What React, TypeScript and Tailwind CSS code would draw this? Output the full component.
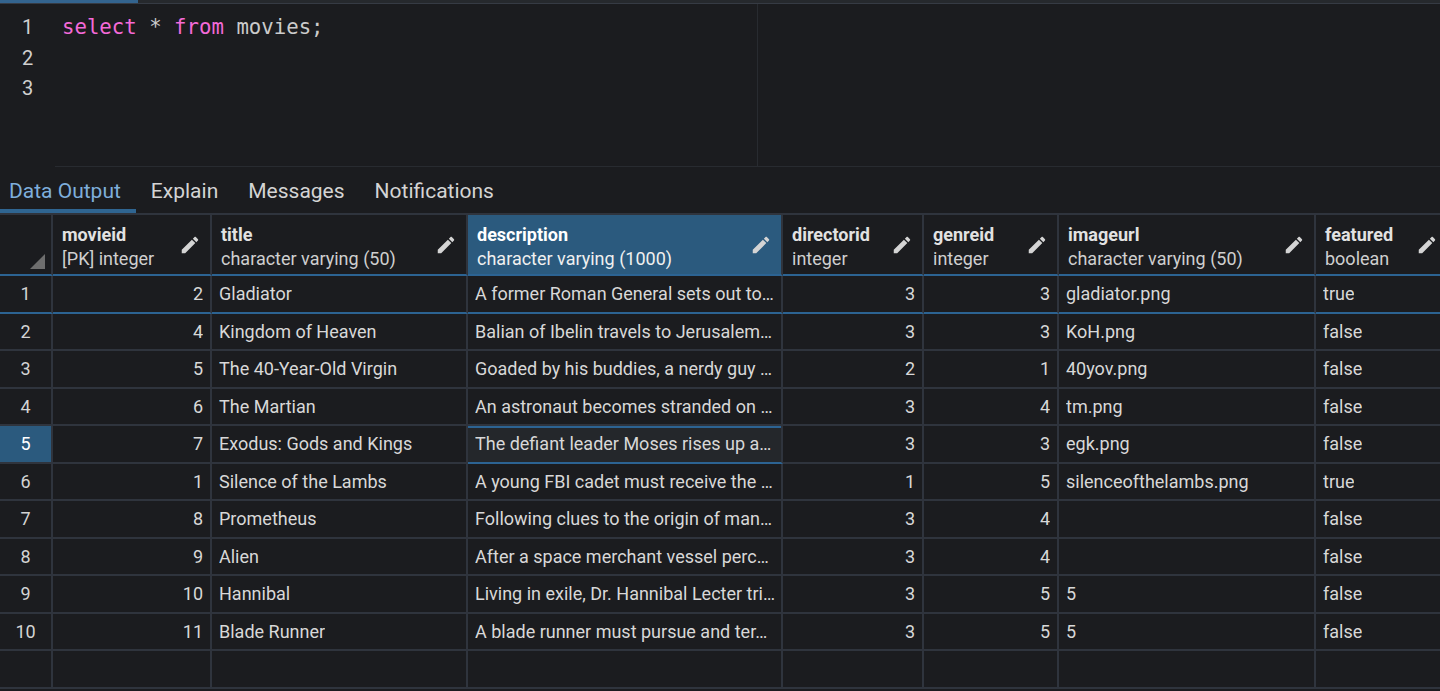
import React from "react";

type Col = { name: string; type: string; width: string; align: "left" | "right"; selected?: boolean };

const cols: Col[] = [
  { name: "movieid", type: "[PK] integer", width: "w-[159px]", align: "right" },
  { name: "title", type: "character varying (50)", width: "w-[256px]", align: "left" },
  { name: "description", type: "character varying (1000)", width: "w-[315px]", align: "left", selected: true },
  { name: "directorid", type: "integer", width: "w-[141px]", align: "right" },
  { name: "genreid", type: "integer", width: "w-[135px]", align: "right" },
  { name: "imageurl", type: "character varying (50)", width: "w-[257px]", align: "left" },
  { name: "featured", type: "boolean", width: "w-[133px]", align: "left" },
];

const rows: string[][] = [
  ["2", "Gladiator", "A former Roman General sets out to…", "3", "3", "gladiator.png", "true"],
  ["4", "Kingdom of Heaven", "Balian of Ibelin travels to Jerusalem…", "3", "3", "KoH.png", "false"],
  ["5", "The 40-Year-Old Virgin", "Goaded by his buddies, a nerdy guy …", "2", "1", "40yov.png", "false"],
  ["6", "The Martian", "An astronaut becomes stranded on …", "3", "4", "tm.png", "false"],
  ["7", "Exodus: Gods and Kings", "The defiant leader Moses rises up a…", "3", "3", "egk.png", "false"],
  ["1", "Silence of the Lambs", "A young FBI cadet must receive the …", "1", "5", "silenceofthelambs.png", "true"],
  ["8", "Prometheus", "Following clues to the origin of man…", "3", "4", "", "false"],
  ["9", "Alien", "After a space merchant vessel perc…", "3", "4", "", "false"],
  ["10", "Hannibal", "Living in exile, Dr. Hannibal Lecter tri…", "3", "5", "5", "false"],
  ["11", "Blade Runner", "A blade runner must pursue and ter…", "3", "5", "5", "false"],
];

function Pencil() {
  return (
    <svg width="22" height="22" viewBox="0 0 24 24" className="shrink-0 fill-[#d4d4d4]">
      <path d="M3 17.25V21h3.75L17.81 9.94l-3.75-3.75L3 17.25zM20.71 7.04c.39-.39.39-1.02 0-1.41l-2.34-2.34c-.39-.39-1.02-.39-1.41 0l-1.83 1.83 3.75 3.75 1.83-1.83z" />
    </svg>
  );
}

export default function App() {
  return (
    <div className="w-[1440px] h-[691px] overflow-hidden bg-[#1b1c1f] font-['Roboto',sans-serif] text-[#d6d6d6]">
      {/* query editor */}
      <div className="flex h-[3px]">
        <div className="w-[138px] bg-[#33648f]" />
        <div className="flex-1 bg-[#26292d]" />
      </div>
      <div className="h-[1px] bg-[#363b44]" />
      <div className="flex h-[163px]">
        <div className="w-[55px] pt-[8px] flex flex-col items-center text-[20px] leading-[30.5px] text-[#d0d0d0]">
          <span>1</span>
          <span>2</span>
          <span>3</span>
        </div>
        <div className="w-[702px] pt-[8px] pl-[7px] font-['DejaVu_Sans_Mono',monospace] text-[20.7px] leading-[30.5px] text-[#cbcbcb] border-b border-[#282b30]">
          <span className="text-[#f46ad8]">select</span> * <span className="text-[#f46ad8]">from</span> movies;
        </div>
        <div className="flex-1 border-l border-b border-[#282b30]" />
      </div>

      {/* result tabs */}
      <div className="flex h-[46px] text-[21px]">
        <div className="pl-[9px] pr-[15px] pt-[8px] flex items-center border-b-4 border-[#2f6591] text-[#7eaedb]">Data Output</div>
        <div className="px-[15px] pt-[4px] flex items-center text-[#d4d4d4]">Explain</div>
        <div className="px-[15px] pt-[4px] flex items-center text-[#d4d4d4]">Messages</div>
        <div className="px-[15px] pt-[4px] flex items-center text-[#d4d4d4]">Notifications</div>
      </div>

      {/* data grid */}
      <div className="border-t-2 border-[#2f343d] text-[18px]">
        <div className="flex h-[61px]">
          <div className="w-[53px] shrink-0 flex items-end justify-end pr-[6px] pb-[5px] border-r-2 border-b-2 border-r-[#2f343d] border-b-[#2c6392]">
            <svg width="15" height="15" viewBox="0 0 15 15">
              <path d="M15 0 L15 15 L0 15 Z" fill="#6e6e6e" />
            </svg>
          </div>
          {cols.map((c) => (
            <div
              key={c.name}
              className={`${c.width} shrink-0 flex items-center justify-between pl-[9px] pr-[9px] border-r-2 border-b-2 border-r-[#2f343d] border-b-[#2c6392] ${c.selected ? "bg-[#2b5a7e] text-white" : ""}`}
            >
              <div className="flex flex-col leading-[24px] pt-[4px]">
                <span className={`font-bold ${c.selected ? "text-white" : "text-[#e2e2e2]"}`}>{c.name}</span>
                <span className={c.selected ? "text-[#f0f0f0]" : "text-[#cfcfcf]"}>{c.type}</span>
              </div>
              <Pencil />
            </div>
          ))}
        </div>

        {rows.map((r, i) => {
          const first = i === 0;
          const active = i === 4;
          const lineB = first ? "border-b-[#2c6392]" : "border-b-[#2f343d]";
          return (
            <div key={i} className="flex h-[37.5px]">
              <div
                className={`w-[53px] shrink-0 flex items-center justify-center border-r-2 border-b-2 border-r-[#2f343d] ${lineB} ${active ? "bg-[#2b5a7e] text-white" : "text-[#d4d4d4]"}`}
              >
                {i + 1}
              </div>
              {r.map((v, j) => {
                const c = cols[j];
                const sel = active && c.selected;
                return (
                  <div
                    key={j}
                    className={`${c.width} shrink-0 flex items-center border-r-2 border-b-2 border-r-[#2f343d] ${sel ? "border-b-[#2c6392] bg-[#24272b] shadow-[inset_0_2px_0_#2c6392]" : lineB} ${c.align === "right" ? "justify-end pr-[7px]" : "pl-[7px] pr-[6px]"}`}
                  >
                    <span className="truncate whitespace-nowrap text-[#d8d8d8]">{v}</span>
                  </div>
                );
              })}
            </div>
          );
        })}

        <div className="flex h-[37.5px]">
          <div className="w-[53px] shrink-0 border-r-2 border-b-2 border-[#2f343d]" />
          {cols.map((c) => (
            <div key={c.name} className={`${c.width} shrink-0 border-r-2 border-b-2 border-[#2f343d]`} />
          ))}
        </div>
      </div>
    </div>
  );
}
